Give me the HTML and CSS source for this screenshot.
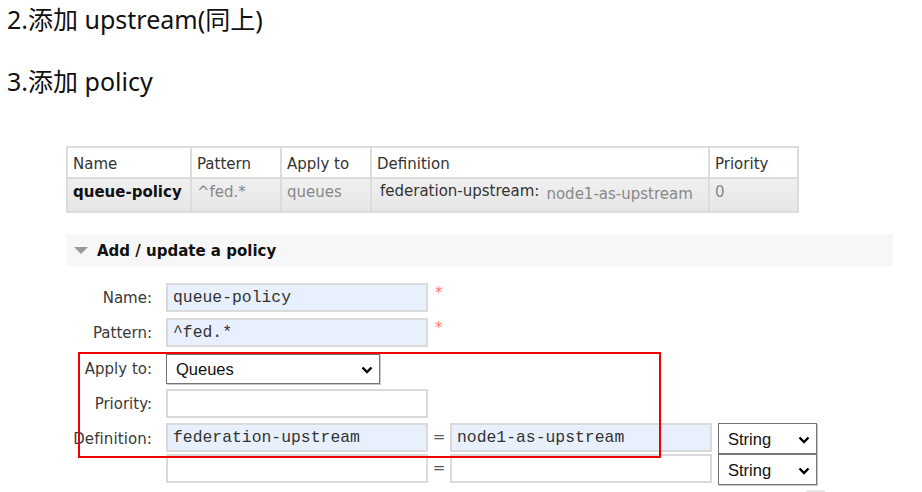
FILE: index.html
```html
<!DOCTYPE html>
<html lang="zh">
<head>
<meta charset="utf-8">
<title>添加 policy</title>
<link rel="stylesheet" href="styles.css">
</head>
<body>
<div class="doc">
  <p class="step step-first">2.添加 upstream(同上)</p>
  <p class="step step-second">3.添加 policy</p>

  <div class="panel">
    <table class="policies">
      <colgroup>
        <col class="c-name"><col class="c-pattern"><col class="c-apply"><col class="c-def"><col class="c-prio">
      </colgroup>
      <thead>
        <tr><th>Name</th><th>Pattern</th><th>Apply to</th><th>Definition</th><th>Priority</th></tr>
      </thead>
      <tbody>
        <tr>
          <td class="strong">queue-policy</td>
          <td class="muted">^fed.*</td>
          <td class="muted">queues</td>
          <td><span class="def-key">federation-upstream:</span><span class="def-val">node1-as-upstream</span></td>
          <td class="muted">0</td>
        </tr>
      </tbody>
    </table>

    <div class="section-head">
      <span class="tri"></span>
      <span class="section-title">Add / update a policy</span>
    </div>

    <form class="policy-form">
      <div class="row row-name">
        <label class="lbl">Name:</label>
        <input class="inp filled" type="text" value="queue-policy">
        <span class="req">*</span>
      </div>
      <div class="row row-pattern">
        <label class="lbl">Pattern:</label>
        <input class="inp filled" type="text" value="^fed.*">
        <span class="req">*</span>
      </div>
      <div class="row row-apply">
        <label class="lbl">Apply to:</label>
        <div class="sel sel-apply">
          <select><option>Queues</option></select>
          <svg class="chev" viewBox="0 0 12 8" width="12" height="8"><path d="M1.5 1.5 L6 6 L10.5 1.5" fill="none" stroke="#000" stroke-width="2.4"/></svg>
        </div>
      </div>
      <div class="row row-prio">
        <label class="lbl">Priority:</label>
        <input class="inp" type="text" value="">
      </div>
      <div class="row row-def">
        <label class="lbl">Definition:</label>
        <input class="inp filled" type="text" value="federation-upstream">
        <span class="eq">=</span>
        <input class="inp filled" type="text" value="node1-as-upstream">
        <div class="sel sel-type">
          <select><option>String</option></select>
          <svg class="chev" viewBox="0 0 12 8" width="12" height="8"><path d="M1.5 1.5 L6 6 L10.5 1.5" fill="none" stroke="#000" stroke-width="2.4"/></svg>
        </div>
      </div>
      <div class="row row-def2">
        <span class="lbl"></span>
        <input class="inp" type="text" value="">
        <span class="eq">=</span>
        <input class="inp" type="text" value="">
        <div class="sel sel-type">
          <select><option>String</option></select>
          <svg class="chev" viewBox="0 0 12 8" width="12" height="8"><path d="M1.5 1.5 L6 6 L10.5 1.5" fill="none" stroke="#000" stroke-width="2.4"/></svg>
        </div>
      </div>
      <div class="peek"></div>
      <div class="highlight"></div>
    </form>
  </div>
</div>
</body>
</html>
```

FILE: styles.css
```css
html, body {
  margin: 0;
  padding: 0;
  background: #fff;
}

.doc {
  position: relative;
  width: 922px;
  height: 492px;
  overflow: hidden;
}

.step {
  margin: 0;
  padding-left: 7px;
  font-family: "Noto Sans", "Noto Sans CJK SC", sans-serif;
  font-size: 25px;
  line-height: 36px;
  color: #111;
}

.step-first {
  padding-top: 1px;
}

.step-second {
  margin-top: 26px;
}

.panel {
  margin-left: 66px;
  margin-top: 47px;
  width: 827px;
  font-family: "DejaVu Sans", Verdana, sans-serif;
  font-size: 15px;
}

/* table */
.policies {
  border-collapse: collapse;
  table-layout: fixed;
  width: 731px;
}
.c-name { width: 124px; }
.c-pattern { width: 90px; }
.c-apply { width: 90px; }
.c-def { width: 338px; }
.c-prio { width: 89px; }

.policies th,
.policies td {
  border: 2px solid #dcdcdc;
  text-align: left;
  padding: 0 5px;
  white-space: nowrap;
}
.policies th {
  height: 27px;
  font-weight: normal;
  color: #333;
  background: #fff;
  padding-top: 2px;
}
.policies td {
  height: 28px;
  vertical-align: top;
  padding-top: 4px;
  background: linear-gradient(#f0f0f0, #e6e6e6);
  color: #333;
}
.policies td.strong {
  font-weight: bold;
  color: #111;
}
.policies td.muted {
  color: #888;
}
.def-key {
  display: inline-block;
  padding-left: 3px;
  color: #333;
  position: relative;
  top: -1px;
}
.def-val {
  display: inline-block;
  padding-left: 7px;
  color: #888;
  position: relative;
  top: 2px;
}

/* section header */
.section-head {
  margin-top: 21px;
  height: 32px;
  background: #f7f7f7;
  display: flex;
  align-items: center;
}
.tri {
  width: 0;
  height: 0;
  margin-left: 8px;
  margin-top: 1px;
  border-left: 7px solid transparent;
  border-right: 7px solid transparent;
  border-top: 7px solid #9a9a9a;
}
.section-title {
  margin-left: 9px;
  margin-top: 2px;
  font-weight: bold;
  color: #111;
}

/* form */
.policy-form {
  position: relative;
  margin-top: 17px;
  margin-left: 0;
}
.row {
  display: flex;
  align-items: center;
}
.row-name { height: 29px; margin-bottom: 6px; }
.row-pattern { height: 29px; margin-bottom: 7px; }
.row-apply { height: 30px; margin-bottom: 5px; }
.row-prio { height: 29px; margin-bottom: 5px; }
.row-def { height: 31px; }
.row-def2 { height: 31px; }

.lbl {
  width: 86px;
  flex: none;
  text-align: right;
  color: #3a3a3a;
  margin-right: 14px;
  white-space: nowrap;
}
.row-def .lbl {
  letter-spacing: 0.1px;
}

.inp {
  box-sizing: border-box;
  width: 262px;
  height: 29px;
  flex: none;
  margin: 0;
  padding: 0 5px;
  border: 2px solid #dadada;
  background: #fff;
  font-family: "Liberation Mono", "Courier New", monospace;
  font-size: 16.4px;
  color: #333;
  outline: none;
}
.row-def .inp, .row-def2 .inp {
  align-self: flex-start;
}
.inp.filled {
  background: #e8f0fe;
}

.req {
  margin-left: 7px;
  color: #f77;
  font-size: 15px;
  align-self: flex-start;
  margin-top: 1px;
}

.eq {
  width: 22px;
  flex: none;
  text-align: center;
  color: #555;
  align-self: flex-start;
  line-height: 29px;
}

.sel {
  position: relative;
  flex: none;
}
.sel select {
  -webkit-appearance: none;
  appearance: none;
  box-sizing: border-box;
  width: 100%;
  height: 100%;
  margin: 0;
  border: 1px solid #767676;
  border-radius: 0;
  background: #fff;
  font-family: "Liberation Sans", Arial, sans-serif;
  font-size: 16.5px;
  color: #111;
  padding: 0 0 0 9px;
  box-shadow: 1px 1px 0 #c8c8c8;
}
.sel-apply {
  width: 214px;
  height: 30px;
}
.sel-type {
  width: 99px;
  height: 31px;
  margin-left: 6px;
}
.chev {
  position: absolute;
  right: 7px;
  top: 50%;
  margin-top: -3px;
  pointer-events: none;
}

.peek {
  margin-left: 740px;
  margin-top: 5px;
  width: 19px;
  height: 6px;
  background: #e6e6e6;
}

.highlight {
  position: absolute;
  left: 12px;
  top: 69px;
  width: 579px;
  height: 102px;
  border: 2px solid #ee0000;
  pointer-events: none;
}
```
